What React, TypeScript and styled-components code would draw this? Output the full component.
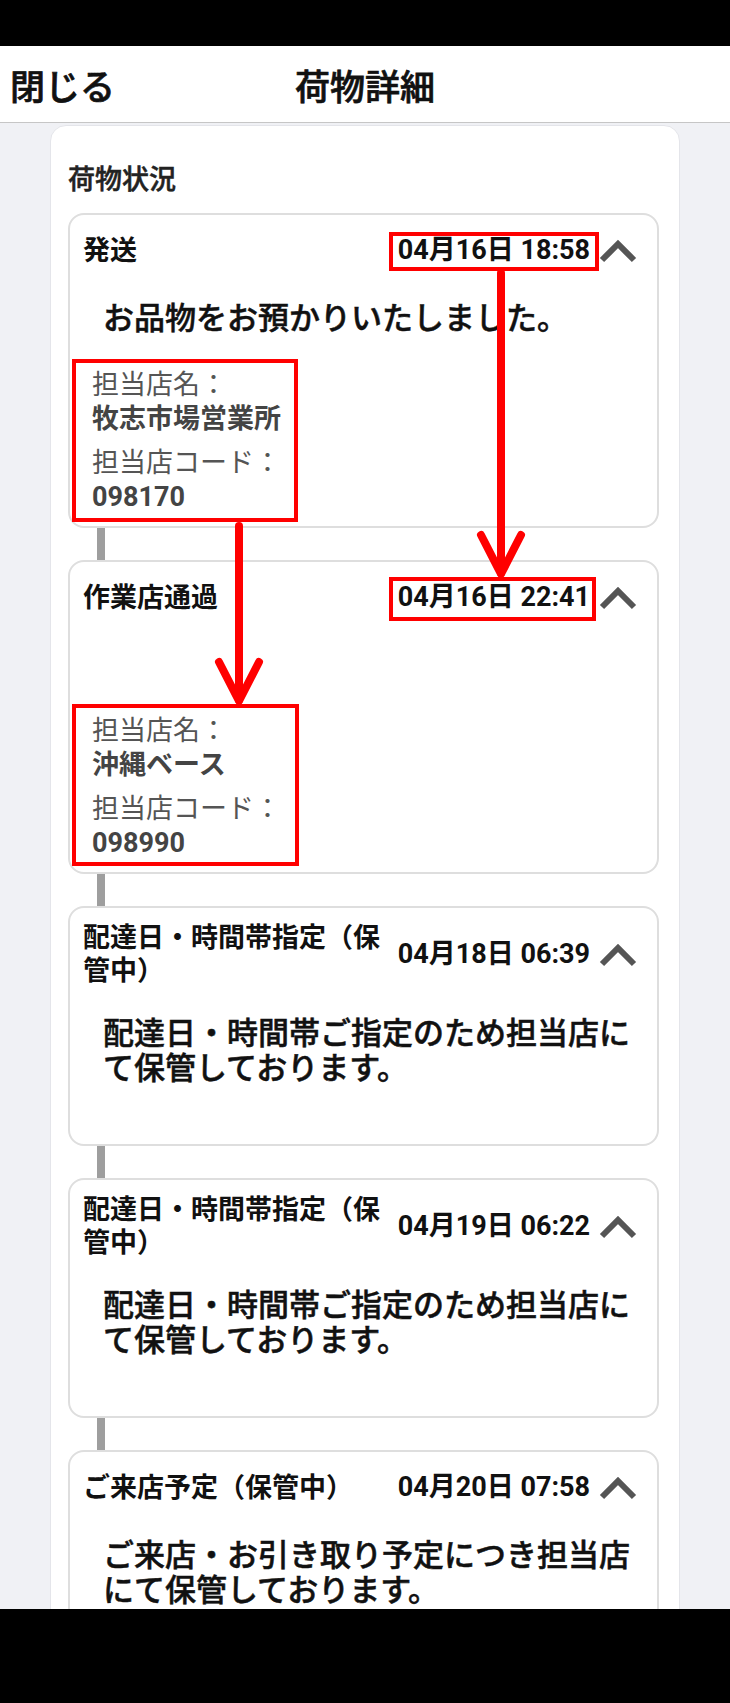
import styled, { createGlobalStyle } from 'styled-components';

const GlobalStyle = createGlobalStyle`
  html, body, #root {
    margin: 0;
    padding: 0;
    height: 100%;
  }
  body {
    background: #000;
    font-family: Roboto, "Noto Sans CJK JP", sans-serif;
  }
  * {
    box-sizing: border-box;
  }
`;

const Screen = styled.div`
  position: relative;
  width: 730px;
  height: 100vh;
  display: flex;
  flex-direction: column;
  overflow: hidden;
  background: #f0f1f5;
`;

const StatusBar = styled.div`
  height: 46px;
  flex-shrink: 0;
  background: #000;
`;

const NavBar = styled.div`
  height: 94px;
  flex-shrink: 0;
  background: #000;
`;

const TopBar = styled.header`
  height: 77px;
  flex-shrink: 0;
  display: grid;
  grid-template-columns: 1fr auto 1fr;
  align-items: center;
  background: #fff;
  border-bottom: 1px solid #c6c6c6;
  font-size: 35px;
  font-weight: 500;
  color: #111;
  -webkit-text-stroke: 0.7px #111;
`;

const CloseButton = styled.div`
  padding-left: 10px;
`;

const PageTitle = styled.div`
  text-align: center;
`;

const Content = styled.main`
  flex: 1;
  min-height: 0;
  overflow: hidden;
  padding: 2px 50px 0;
`;

const Panel = styled.section`
  background: #fff;
  border: 1px solid #e4e5ea;
  border-radius: 16px;
  padding: 37px 20px 40px 17px;
`;

const SectionTitle = styled.h2`
  margin: 0 0 16px;
  font-size: 27px;
  line-height: 34px;
  font-weight: 500;
  color: #222;
  -webkit-text-stroke: 0.5px #222;
`;

const Card = styled.div<{ $tail: number }>`
  background: #fff;
  border: 2px solid #dedede;
  border-radius: 16px;
  padding: 14px 0 ${(p) => p.$tail}px;
`;

const CardHeader = styled.div`
  display: flex;
  align-items: center;
  min-height: 44px;
  padding: 0 19px 0 13px;
`;

const EventTitle = styled.div`
  flex: 1;
  min-width: 0;
  margin-right: 10px;
  font-size: 27px;
  line-height: 33px;
  font-weight: 700;
  color: #111;
`;

const EventDate = styled.div`
  flex-shrink: 0;
  white-space: nowrap;
  font-size: 27px;
  line-height: 1.3;
  font-weight: 700;
  color: #111;
`;

const Chevron = styled.svg`
  flex-shrink: 0;
  margin-left: 8px;
`;

const Message = styled.p`
  margin: 28px 0 0;
  min-height: 34px;
  padding: 0 14px 0 33px;
  font-size: 31px;
  line-height: 35px;
  font-weight: 500;
  color: #111;
  -webkit-text-stroke: 0.5px #111;
`;

const StoreInfo = styled.div`
  margin-top: 32px;
  padding-left: 22px;
  font-size: 27px;
  line-height: 34px;
`;

const StoreItem = styled.div`
  & + & {
    margin-top: 10px;
  }
`;

const StoreLabel = styled.div`
  color: #555;
  font-weight: 400;
`;

const StoreValue = styled.div`
  color: #444;
  font-weight: 700;
`;

const Connector = styled.div`
  width: 8px;
  height: 32px;
  margin-left: 29px;
  background: #9e9e9e;
`;

const Annotations = styled.svg`
  position: absolute;
  top: 0;
  left: 0;
  pointer-events: none;
`;

type TrackEvent = {
  title: string;
  date: string;
  message: string;
  store?: { name: string; code: string };
};

const events: TrackEvent[] = [
  {
    title: '発送',
    date: '04月16日 18:58',
    message: 'お品物をお預かりいたしました。',
    store: { name: '牧志市場営業所', code: '098170' },
  },
  {
    title: '作業店通過',
    date: '04月16日 22:41',
    message: '',
    store: { name: '沖縄ベース', code: '098990' },
  },
  {
    title: '配達日・時間帯指定（保管中）',
    date: '04月18日 06:39',
    message: '配達日・時間帯ご指定のため担当店にて保管しております。',
  },
  {
    title: '配達日・時間帯指定（保管中）',
    date: '04月19日 06:22',
    message: '配達日・時間帯ご指定のため担当店にて保管しております。',
  },
  {
    title: 'ご来店予定（保管中）',
    date: '04月20日 07:58',
    message: 'ご来店・お引き取り予定につき担当店にて保管しております。',
  },
];

const ChevronUp = () => (
  <Chevron width="40" height="26" viewBox="0 0 40 26">
    <path d="M4 22 L20 6 L36 22" fill="none" stroke="#555" strokeWidth="6" />
  </Chevron>
);

const EventCard = ({ event }: { event: TrackEvent }) => (
  <Card $tail={event.store ? 12 : 58}>
    <CardHeader>
      <EventTitle>{event.title}</EventTitle>
      <EventDate>{event.date}</EventDate>
      <ChevronUp />
    </CardHeader>
    <Message>{event.message}</Message>
    {event.store && (
      <StoreInfo>
        <StoreItem>
          <StoreLabel>担当店名：</StoreLabel>
          <StoreValue>{event.store.name}</StoreValue>
        </StoreItem>
        <StoreItem>
          <StoreLabel>担当店コード：</StoreLabel>
          <StoreValue>{event.store.code}</StoreValue>
        </StoreItem>
      </StoreInfo>
    )}
  </Card>
);

// red marks drawn over the screenshot
const Markup = () => (
  <Annotations width="730" height="1703" viewBox="0 0 730 1703">
    <g fill="none" stroke="#ff0000" strokeWidth="4">
      <rect x="391" y="234" width="206" height="35" />
      <rect x="391" y="579" width="203" height="40" />
      <rect x="74" y="361" width="222" height="159" />
      <rect x="74" y="706" width="223" height="158" />
    </g>
    <g fill="none" stroke="#ff0000" strokeWidth="8" strokeLinecap="round" strokeLinejoin="round">
      <path d="M501 273 L501 573" />
      <path d="M481 535 L501 574 L521 535" />
      <path d="M239 526 L239 700" />
      <path d="M219 662 L239 701 L259 662" />
    </g>
  </Annotations>
);

export default function App() {
  return (
    <>
      <GlobalStyle />
      <Screen>
        <StatusBar />
        <TopBar>
          <CloseButton>閉じる</CloseButton>
          <PageTitle>荷物詳細</PageTitle>
          <div />
        </TopBar>
        <Content>
          <Panel>
            <SectionTitle>荷物状況</SectionTitle>
            {events.map((event, i) => (
              <div key={i}>
                {i > 0 && <Connector />}
                <EventCard event={event} />
              </div>
            ))}
          </Panel>
        </Content>
        <NavBar />
        <Markup />
      </Screen>
    </>
  );
}
